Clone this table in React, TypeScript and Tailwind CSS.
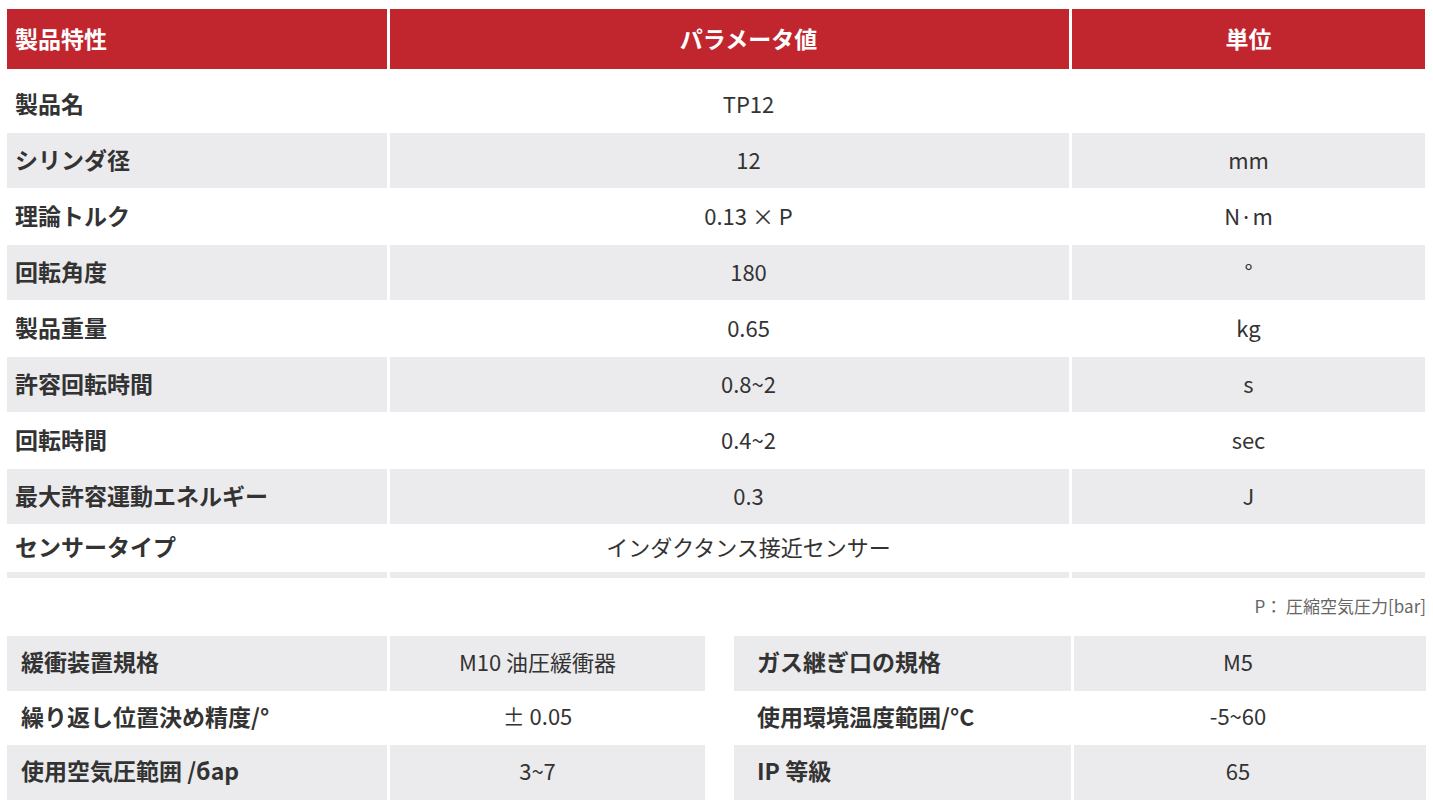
import React from 'react';

interface SpecRow {
  label: string;
  value: string;
  unit: string;
}

const specs: SpecRow[] = [
  { label: '製品名', value: 'TP12', unit: '' },
  { label: 'シリンダ径', value: '12', unit: 'mm' },
  { label: '理論トルク', value: '0.13 × P', unit: 'N·m' },
  { label: '回転角度', value: '180', unit: '°' },
  { label: '製品重量', value: '0.65', unit: 'kg' },
  { label: '許容回転時間', value: '0.8~2', unit: 's' },
  { label: '回転時間', value: '0.4~2', unit: 'sec' },
  { label: '最大許容運動エネルギー', value: '0.3', unit: 'J' },
  { label: 'センサータイプ', value: 'インダクタンス接近センサー', unit: '' },
];

const leftExtra = [
  { label: '緩衝装置規格', value: 'M10 油圧緩衝器' },
  { label: '繰り返し位置決め精度/°', value: '± 0.05' },
  { label: '使用空気圧範囲 /бap', value: '3~7' },
];

const rightExtra = [
  { label: 'ガス継ぎ口の規格', value: 'M5' },
  { label: '使用環境温度範囲/°C', value: '-5~60' },
  { label: 'IP 等級', value: '65' },
];

const font = { fontFamily: '"Noto Sans CJK JP", "Noto Sans", sans-serif' };

const grid = 'grid grid-cols-[380px_679px_353px] gap-x-[3px]';

export default function App() {
  return (
    <div className="w-[1433px] h-[811px] bg-white px-[7px] pt-[9px] text-[#333]" style={font}>
      {/* main spec table */}
      <div className={`${grid} h-[60px] text-white text-[23px] font-bold`}>
        <div className="bg-[#c1262f] flex items-center pl-[8px] pb-[2px]">製品特性</div>
        <div className="bg-[#c1262f] flex items-center justify-center pl-[38px] pb-[2px]">パラメータ値</div>
        <div className="bg-[#c1262f] flex items-center justify-center pb-[2px]">単位</div>
      </div>

      <div className="pt-[8px] flex flex-col gap-y-[1px]">
        {specs.map((row, i) => {
          const bg = i % 2 === 1 ? 'bg-[#ebebed]' : 'bg-white';
          const h = i === specs.length - 1 ? 'h-[46px]' : 'h-[55px]';
          return (
            <div key={row.label} className={`${grid} ${h}`}>
              <div className={`${bg} flex items-center pl-[8px] pb-[3px] text-[23px] font-semibold`}>{row.label}</div>
              <div className={`${bg} flex items-center justify-center pl-[38px] pb-[3px] text-[22px]`}>{row.value}</div>
              <div className={`${bg} flex items-center justify-center pb-[3px] text-[22px]`}>{row.unit}</div>
            </div>
          );
        })}
        <div className={`${grid} h-[6px]`}>
          <div className="bg-[#ebebed]" />
          <div className="bg-[#ebebed]" />
          <div className="bg-[#ebebed]" />
        </div>
      </div>

      <div className="h-[58px] flex items-center justify-end pb-[2px] text-[17px] text-[#666]">
        P： 圧縮空気圧力[bar]
      </div>

      {/* extra specs */}
      <div className="flex justify-between">
        <div className="w-[698px] flex flex-col">
          {leftExtra.map((row, i) => {
            const bg = i % 2 === 0 ? 'bg-[#ebebed]' : 'bg-white';
            return (
              <div key={row.label} className="grid grid-cols-[380px_315px] gap-x-[3px] h-[54.5px]">
                <div className={`${bg} flex items-center pl-[14px] pb-[4px] text-[23px] font-semibold`}>{row.label}</div>
                <div className={`${bg} flex items-center justify-center pr-[20px] pb-[4px] text-[22px]`}>{row.value}</div>
              </div>
            );
          })}
        </div>
        <div className="w-[692px] flex flex-col">
          {rightExtra.map((row, i) => {
            const bg = i % 2 === 0 ? 'bg-[#ebebed]' : 'bg-white';
            return (
              <div key={row.label} className="grid grid-cols-[337px_352px] gap-x-[3px] h-[54.5px]">
                <div className={`${bg} flex items-center pl-[23px] pb-[4px] text-[23px] font-semibold`}>{row.label}</div>
                <div className={`${bg} flex items-center justify-center pr-[24px] pb-[4px] text-[22px]`}>{row.value}</div>
              </div>
            );
          })}
        </div>
      </div>
    </div>
  );
}
